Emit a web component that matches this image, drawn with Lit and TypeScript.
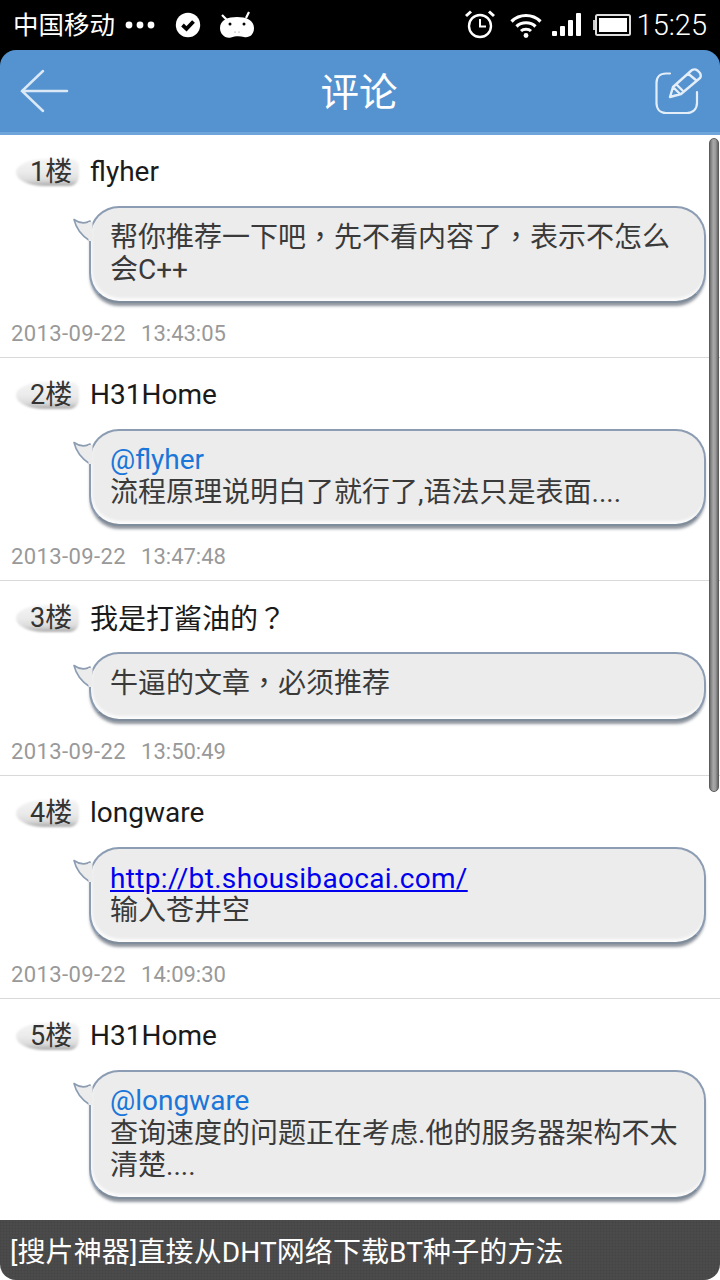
import { LitElement, html, css } from "lit";
import { customElement } from "lit/decorators.js";

type Comment = { floor: number; user: string; at?: string; link?: string; text: string; date?: string; time?: string };

const comments: Comment[] = [
  { floor: 1, user: "flyher", text: "帮你推荐一下吧，先不看内容了，表示不怎么\n会C++", date: "2013-09-22", time: "13:43:05" },
  { floor: 2, user: "H31Home", at: "@flyher", text: "流程原理说明白了就行了,语法只是表面....", date: "2013-09-22", time: "13:47:48" },
  { floor: 3, user: "我是打酱油的？", text: "牛逼的文章，必须推荐", date: "2013-09-22", time: "13:50:49" },
  { floor: 4, user: "longware", link: "http://bt.shousibaocai.com/", text: "输入苍井空", date: "2013-09-22", time: "14:09:30" },
  { floor: 5, user: "H31Home", at: "@longware", text: "查询速度的问题正在考虑.他的服务器架构不太\n清楚...." },
];

// Full-width punctuation sits centred in its cell in the reference, as in the TC face.
const punct = (s: string) =>
  s.split(/([，？])/).map((p) => (p === "，" || p === "？" ? html`<span class="p">${p}</span>` : p));

@customElement("app-root")
export class AppRoot extends LitElement {
  static styles = css`
    :host { display: block; width: 720px; height: 1280px; background: #000; font-family: Roboto, "Noto Sans CJK SC", sans-serif; overflow: hidden; position: relative; }
    .p { font-family: "Noto Sans CJK TC", sans-serif; line-height: 0; }
    .status { height: 50px; display: flex; align-items: center; color: #fff; padding: 0 13px; box-sizing: border-box; }
    .carrier { font-size: 25.5px; line-height: 50px; width: 102px; white-space: nowrap; }
    .status svg { display: block; flex: none; }
    .dots { margin-left: 9px; }
    .check { margin-left: 19px; }
    .droid { margin-left: 18px; }
    .spacer { flex: 1; }
    .clock { font-size: 29px; font-weight: 300; margin-left: 6px; }
    .wifi { margin-left: 14px; }
    .signal { margin-left: 9px; }
    .battery { margin-left: 12px; }
    .head { height: 85px; background: #5593d0; border-radius: 16px 16px 0 0; border-bottom: 3px solid #6ea5da; box-sizing: border-box; display: flex; align-items: center; justify-content: space-between; padding: 0 17px 0 19px; position: relative; }
    .title { position: absolute; left: 0; right: 2px; top: 18px; text-align: center; color: #fff; font-size: 38.5px; line-height: 50px; }
    .list { background: #fff; height: 1145px; overflow: hidden; }
    .row { border-bottom: 1px solid #d9d9d9; }
    .row.last { border-bottom: 0; }
    .user { display: flex; align-items: center; height: 71px; padding-left: 16px; padding-top: 3px; box-sizing: border-box; font-size: 28px; color: #1a1a1a; }
    .floor { position: relative; width: 64px; height: 28px; line-height: 28px; box-sizing: border-box; padding-left: 14px; margin-right: 10px; color: #333; font-size: 27px; white-space: nowrap; }
    .floor::before { content: ""; position: absolute; z-index: 0; inset: 1px 1px 0 0; border-radius: 45% 8px 9px 45% / 50% 8px 10px 50%; background: linear-gradient(#f4f4f4, #ebebeb 50%, #dcdcdc 78%, #aaa); filter: blur(1px); }
    .floor span { position: relative; }
    .name { white-space: nowrap; margin-top: -2px; }
    .bubble-wrap { position: relative; margin-left: 89px; width: 617px; }
    .tail { position: absolute; left: -16px; top: 12px; display: block; }
    .bubble { box-sizing: border-box; border: 2px solid #8c9db3; border-bottom-color: #7f8c9c; border-radius: 30px; background: #ececec; box-shadow: 0 4px 3px -1px rgba(70, 80, 95, .6), inset 1px -3px 3px rgba(255, 255, 255, .8); padding: 14px 19px 15px; font-size: 28px; line-height: 32px; color: #3a3a3a; }
    .bubble.short { min-height: 69px; }
    .line { display: block; white-space: nowrap; }
    .at { color: #1a76d8; display: block; margin: -1px 0 1px; }
    a { color: #0000ee; display: block; text-decoration: underline; letter-spacing: .33px; }
    .time { display: flex; gap: 15px; box-sizing: border-box; height: 54px; padding: 19px 0 0 11px; line-height: 24px; color: #999; font-size: 22px; white-space: nowrap; }
    .date { letter-spacing: .4px; }
    .scroll { position: absolute; left: 709px; top: 138px; width: 10px; height: 654px; border-radius: 5px; box-sizing: border-box; border: 1px solid #5c5c5c; background: linear-gradient(90deg, #707070, #a8a8a8 40%, #9a9a9a 70%, #666); }
    .foot { position: absolute; left: 0; right: 0; top: 1220px; height: 60px; background: repeating-linear-gradient(90deg, rgba(0,0,0,.04) 0 1px, transparent 1px 3px), repeating-linear-gradient(0deg, rgba(0,0,0,.04) 0 1px, transparent 1px 3px), #4b4b4b; border-radius: 0 0 16px 16px; color: #fff; font-size: 28px; line-height: 66px; padding-left: 10px; white-space: nowrap; letter-spacing: .1px; }
  `;

  private row(c: Comment) {
    const lines = c.text.split("\n");
    const short = lines.length === 1 && !c.at && !c.link;
    return html`<div class="row ${c.date ? "" : "last"}">
      <div class="user"><span class="floor"><span>${c.floor}楼</span></span><span class="name">${punct(c.user)}</span></div>
      <div class="bubble-wrap">
        <svg class="tail" width="20" height="30" viewBox="0 0 20 30"><path d="M1 1.5 C6 5 12 6 17 3 L17 23 C9 18 3 10 1 1.5 Z" fill="#ececec" stroke="#8c9db3" stroke-width="1.6" stroke-linejoin="round"/><rect x="15.5" y="4" width="4" height="19" fill="#ececec"/></svg>
        <div class="bubble ${short ? "short" : ""}">
          ${c.at ? html`<span class="at">${c.at}</span>` : ""}
          ${c.link ? html`<a>${c.link}</a>` : ""}
          ${lines.map((l) => html`<span class="line">${punct(l)}</span>`)}
        </div>
      </div>
      ${c.date ? html`<div class="time"><span class="date">${c.date}</span><span>${c.time}</span></div>` : ""}
    </div>`;
  }

  render() {
    return html`
      <div class="status">
        <span class="carrier">中国移动</span>
        <svg class="dots" width="32" height="10" viewBox="0 0 32 10"><circle cx="5" cy="5" r="3.4" fill="#fff"/><circle cx="16" cy="5" r="3.4" fill="#fff"/><circle cx="27" cy="5" r="3.4" fill="#fff"/></svg>
        <svg class="check" width="26" height="26" viewBox="0 0 26 26"><circle cx="13" cy="13" r="12.2" fill="#fff"/><path d="M7.5 13 L11.5 16.8 L18.5 9.5" fill="none" stroke="#000" stroke-width="3.8"/></svg>
        <svg class="droid" width="36" height="28" viewBox="0 0 36 28"><path d="M3 4 L8 9 M30 1 L27 7" stroke="#fff" stroke-width="2.2" fill="none"/><path d="M1 17 C1 9 9 6 18 6 C27 6 35 9 35 17 C35 24 30 27 25 26 C21 25 16 25 12 26.5 C6 28 1 23 1 17 Z" fill="#fff"/><circle cx="11" cy="13" r="1.5" fill="#000"/><circle cx="25" cy="13" r="1.5" fill="#000"/><circle cx="16" cy="21" r=".6" fill="#777"/><circle cx="20" cy="21" r=".6" fill="#777"/></svg>
        <span class="spacer"></span>
        <svg class="alarm" width="32" height="30" viewBox="0 0 32 30"><circle cx="16" cy="16" r="11" fill="none" stroke="#fff" stroke-width="2.4"/><path d="M16 9 V16.5 H22" fill="none" stroke="#fff" stroke-width="2"/><path d="M2 6 L7 1.5 M30 6 L25 1.5" stroke="#fff" stroke-width="3"/></svg>
        <svg class="wifi" width="32" height="26" viewBox="0 0 32 26"><path d="M1.5 9.5 C9.5 1.5 22.5 1.5 30.5 9.5" fill="none" stroke="#fff" stroke-width="3.2"/><path d="M6.5 14.5 C11.5 9.5 20.5 9.5 25.5 14.5" fill="none" stroke="#fff" stroke-width="3.2"/><path d="M11 19 C13.5 16.5 18.5 16.5 21 19" fill="none" stroke="#fff" stroke-width="3"/><circle cx="16" cy="23.5" r="2.4" fill="#fff"/></svg>
        <svg class="signal" width="30" height="24" viewBox="0 0 30 24"><rect x="1" y="18" width="5" height="5" rx="1" fill="#fff"/><rect x="9" y="13" width="5" height="10" rx="1" fill="#fff"/><rect x="17" y="7" width="5" height="16" rx="1" fill="#fff"/><rect x="25" y="0" width="5" height="23" rx="1" fill="#fff"/></svg>
        <svg class="battery" width="38" height="22" viewBox="0 0 38 22"><rect x="0" y="6" width="3" height="10" fill="#ccc"/><rect x="3" y="1" width="34" height="20" rx="1.5" fill="none" stroke="#ddd" stroke-width="2"/><rect x="6" y="4" width="28" height="14" fill="#fff"/></svg>
        <span class="clock">15:25</span>
      </div>
      <div class="head">
        <svg width="50" height="44" viewBox="0 0 50 44"><path d="M24 2 L3 22 L24 42 M3 22 H48" fill="none" stroke="#dbe8f5" stroke-width="2.5" stroke-linecap="round"/></svg>
        <div class="title">评论</div>
        <svg width="48" height="48" viewBox="0 0 48 48"><path d="M15 6.5 H11 C5 6.5 1.5 10 1.5 16 V36 C1.5 42 5 46 11 46 H32 C38 46 42 42 42 36 V25" fill="none" stroke="#e4eef8" stroke-width="2.2" stroke-linecap="round"/><path d="M15 30 L18 20 L37 3 Q40 1.5 42.5 3.5 L45 6 Q46.5 9 45 11 L26 27 Z M33 6.5 L42 14 M19 21 L25 27 M22 18 L29 25" fill="none" stroke="#e4eef8" stroke-width="2.4" stroke-linejoin="round"/></svg>
      </div>
      <div class="list">${comments.map((c) => this.row(c))}</div>
      <div class="scroll"></div>
      <div class="foot">[搜片神器]直接从DHT网络下载BT种子的方法</div>
    `;
  }
}
